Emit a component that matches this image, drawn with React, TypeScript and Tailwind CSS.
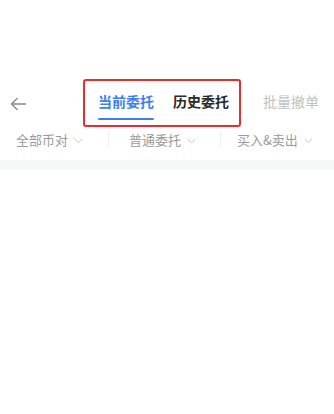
import React, { useState } from 'react'

const Chevron = () => (
  <svg width="9" height="6" viewBox="0 0 9 6" fill="none" className="ml-[6px] mt-[1px]">
    <path d="M0.8 1 L4.5 4.6 L8.2 1" stroke="#c4c4c4" strokeWidth="1" />
  </svg>
)

const App: React.FC = () => {
  const [tab, setTab] = useState(0)
  const tabs = ['当前委托', '历史委托']
  const filters = [
    { label: '全部币对', pad: 'pl-[16px] w-[108px]' },
    { label: '普通委托', pad: 'pl-[21px] w-[112px]' },
    { label: '买入&卖出', pad: 'pl-[17px] flex-1' }
  ]

  return (
    <div className="min-h-screen bg-white pt-[79px] font-['Noto_Sans_CJK_SC','Noto_Sans',sans-serif]">
      <div className="flex items-start">
        <button className="w-[83px] h-[48px] flex items-center pl-[10px] pt-[2px]">
          <svg width="17" height="14" viewBox="0 0 17 14" fill="none">
            <path d="M16 7 H1.5 M7.5 1 L1.5 7 L7.5 13" stroke="#8a8a8a" strokeWidth="1.4" />
          </svg>
        </button>
        <div className="w-[158px] h-[48px] border-2 border-[#ee2a2a] rounded-[3px] flex pl-[13px] pt-[10px] gap-[19px]">
          {tabs.map((t, i) => (
            <div key={t} className="flex flex-col cursor-pointer" onClick={() => setTab(i)}>
              <span className={`text-[14px] leading-[20px] font-bold ${tab === i ? 'text-[#3b7ff2]' : 'text-[#2a2a2a]'}`}>{t}</span>
              <span className={`mt-[7px] h-[2px] rounded-full ${tab === i ? 'bg-[#3b7ff2]' : 'bg-transparent'}`} />
            </div>
          ))}
        </div>
        <div className="flex-1 h-[48px] flex items-start pt-[12px] pl-[22px]">
          <span className="text-[14px] leading-[20px] text-[#c2c2c2]">批量撤单</span>
        </div>
      </div>

      <div className="flex items-center h-[26px]">
        {filters.map((f, i) => (
          <div key={f.label} className={`flex items-center h-full ${f.pad} ${i > 0 ? 'relative' : ''}`}>
            {i > 0 && <span className="absolute left-0 top-[5px] w-px h-[15px] bg-[#eeeeee]" />}
            <span className="text-[13px] leading-[18px] text-[#9a9a9a]">{f.label}</span>
            <Chevron />
          </div>
        ))}
      </div>

      <div className="mt-[7px] h-[10px] bg-[#f6f7f9]" />
    </div>
  )
}

export default App
